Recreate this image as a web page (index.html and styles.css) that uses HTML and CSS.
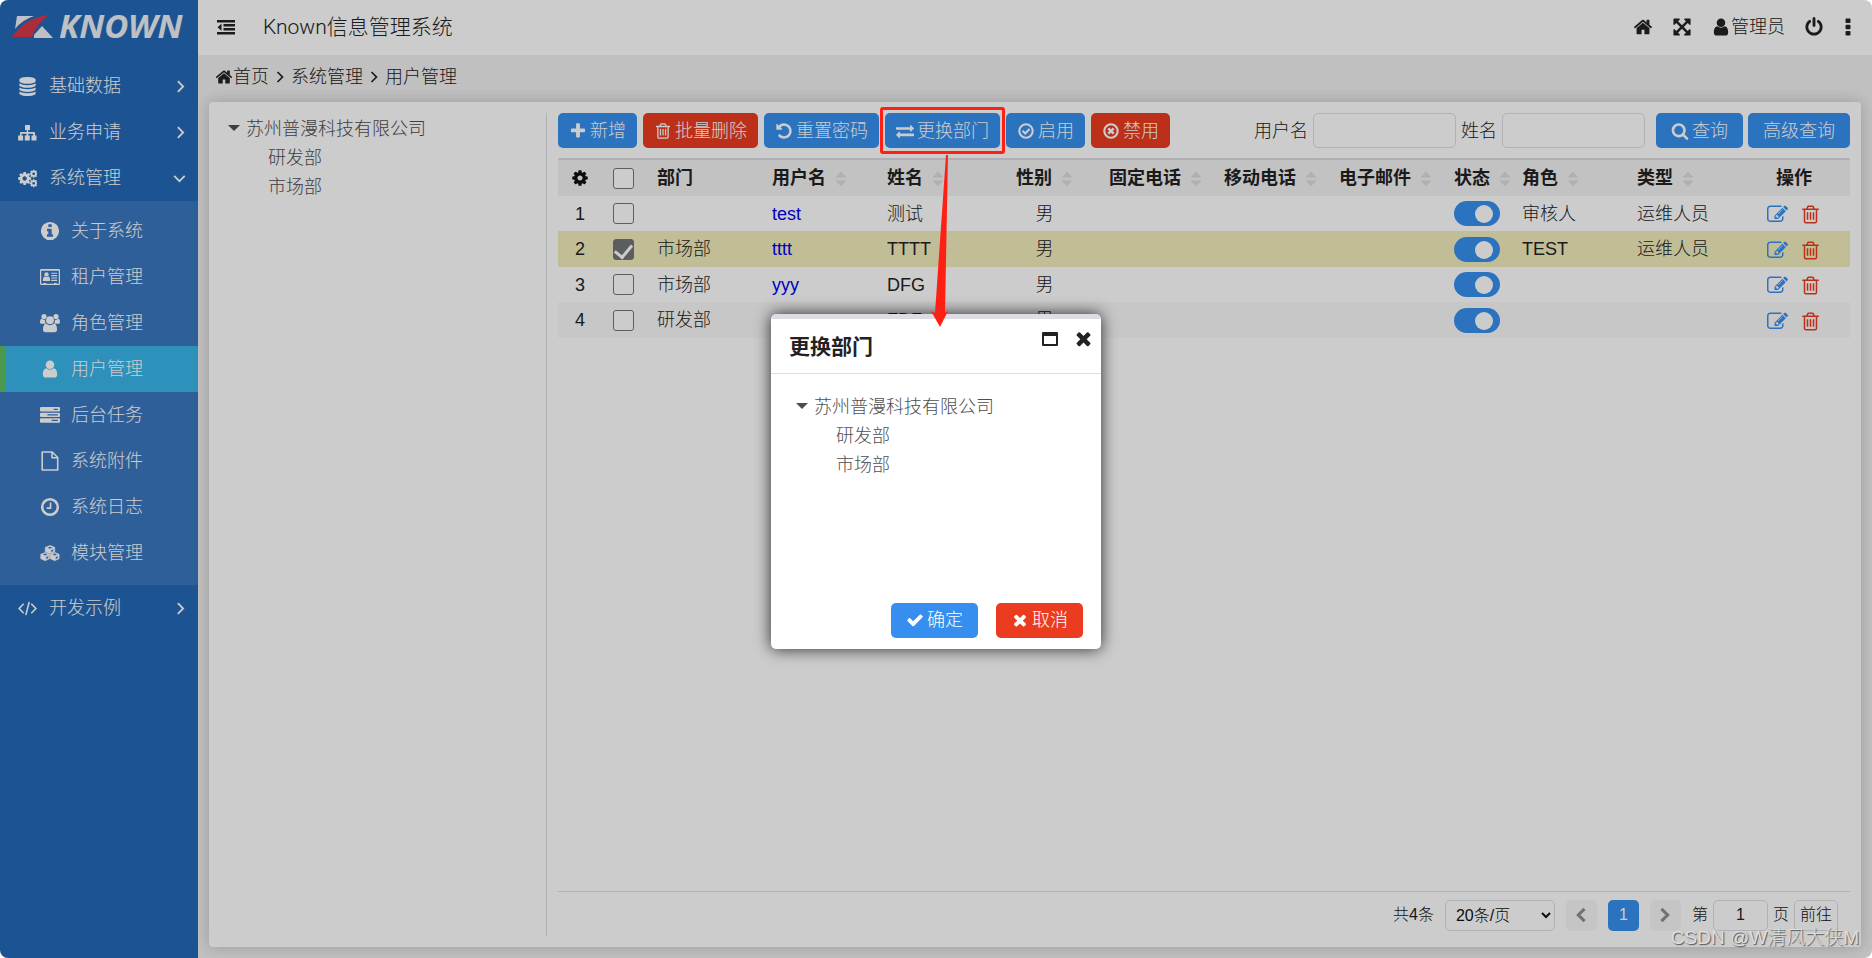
FILE: index.html
```
<!DOCTYPE html>
<html lang="zh-CN">
<head>
<meta charset="utf-8">
<title>Known信息管理系统</title>
<link rel="stylesheet" href="styles.css">
</head>
<body>
<svg class="sprite" aria-hidden="true">
  <symbol id="home" viewBox="0 0 1792 1792"><path d="M1472 992v480q0 26-19 45t-45 19h-384v-384h-256v384h-384q-26 0-45-19t-19-45v-480q0-1 .5-3t.5-3l575-474 575 474q1 2 1 6zm223-69l-62 74q-8 9-21 11h-3q-13 0-21-7l-692-577-692 577q-12 8-24 7-13-2-21-11l-62-74q-8-10-7-23.500t11-21.500l719-599q32-26 76-26t76 26l244 204v-195q0-14 9-23t23-9h192q14 0 23 9t9 23v408l219 182q10 8 11 21.500t-7 23.500z"/></symbol>
  <symbol id="user" viewBox="0 0 1792 1792"><path d="M1536 1399q0 109-62.500 187t-150.500 78h-854q-88 0-150.500-78t-62.500-187q0-85 8.500-160.500t31.500-152 58.500-131 94-89 134.500-34.500q131 128 313 128t313-128q76 0 134.500 34.500t94 89 58.500 131 31.500 152 8.500 160.500zm-256-887q0 159-112.500 271.500t-271.500 112.500-271.500-112.500-112.500-271.500 112.500-271.500 271.500-112.500 271.500 112.500 112.500 271.500z"/></symbol>
  <symbol id="expand" viewBox="0 0 1792 1792"><path d="M1411 541l-355 355 355 355 144-144q29-31 70-14 39 17 39 59v448q0 26-19 45t-45 19h-448q-42 0-59-40-17-39 14-69l144-144-355-355-355 355 144 144q31 30 14 69-17 40-59 40h-448q-26 0-45-19t-19-45v-448q0-42 40-59 39-17 69 14l144 144 355-355-355-355-144 144q-19 19-45 19-12 0-24-5-40-17-40-59v-448q0-26 19-45t45-19h448q42 0 59 40 17 39-14 69l-144 144 355 355 355-355-144-144q-31-30-14-69 17-40 59-40h448q26 0 45 19t19 45v448q0 42-39 59-13 5-25 5-26 0-45-19z"/></symbol>
  <symbol id="power" viewBox="0 0 1792 1792"><path d="M1664 896q0 156-61 298t-164 245-245 164-298 61-298-61-245-164-164-245-61-298q0-182 80.500-343t226.500-270q43-32 95.500-25t83.500 50q32 42 24.500 94.500t-49.500 84.500q-98 74-151.500 181t-53.500 228q0 104 40.500 198.500t109.500 163.500 163.500 109.500 198.500 40.500 198.500-40.500 163.500-109.500 109.500-163.500 40.500-198.500q0-121-53.500-228t-151.500-181q-42-32-49.500-84.500t24.500-94.500q31-43 84-50t95 25q146 109 226.500 270t80.500 343zm-640-768v640q0 52-38 90t-90 38-90-38-38-90v-640q0-52 38-90t90-38 90 38 38 90z"/></symbol>
  <symbol id="more" viewBox="0 0 10 20"><rect x="2.500" y="1.500" width="5" height="4.500" rx="1"/><rect x="2.500" y="7.700" width="5" height="4.500" rx="1"/><rect x="2.500" y="14" width="5" height="4.500" rx="1"/></symbol>
  <symbol id="dedent" viewBox="0 0 18 16"><path d="M0 1h18v2.500H0zM6.500 5h11.500v2.500H6.500zM6.500 9h11.500v2.500H6.500zM0 13h18v2.500H0zM4.500 4.700v7L0.500 8.200z"/></symbol>
  <symbol id="plus" viewBox="0 0 1792 1792"><path d="M1600 736v192q0 40-28 68t-68 28h-416v416q0 40-28 68t-68 28h-192q-40 0-68-28t-28-68v-416h-416q-40 0-68-28t-28-68v-192q0-40 28-68t68-28h416v-416q0-40 28-68t68-28h192q40 0 68 28t28 68v416h416q40 0 68 28t28 68z"/></symbol>
  <symbol id="trash" viewBox="0 0 1792 1792"><path d="M704 736v576q0 14-9 23t-23 9h-64q-14 0-23-9t-9-23v-576q0-14 9-23t23-9h64q14 0 23 9t9 23zm256 0v576q0 14-9 23t-23 9h-64q-14 0-23-9t-9-23v-576q0-14 9-23t23-9h64q14 0 23 9t9 23zm256 0v576q0 14-9 23t-23 9h-64q-14 0-23-9t-9-23v-576q0-14 9-23t23-9h64q14 0 23 9t9 23zm128 724v-948h-896v948q0 22 7 40.500t14.500 27 10.500 8.500h832q3 0 10.500-8.500t14.500-27 7-40.500zm-672-1076h448l-48-117q-7-9-17-11h-317q-10 2-17 11zm928 32v64q0 14-9 23t-23 9h-96v948q0 83-47 143.500t-113 60.500h-832q-66 0-113-58.500t-47-141.500v-952h-96q-14 0-23-9t-9-23v-64q0-14 9-23t23-9h309l70-167q15-37 54-63t79-26h320q40 0 79 26t54 63l70 167h309q14 0 23 9t9 23z"/></symbol>
  <symbol id="undo" viewBox="0 0 1792 1792"><path d="M1664 896q0 156-61 298t-164 245-245 164-298 61q-172 0-327-72.500t-264-204.500q-7-10-6.500-22.500t8.500-20.500l137-138q10-9 25-9 16 2 23 12 73 95 179 147t225 52q104 0 198.500-40.500t163.500-109.500 109.500-163.500 40.500-198.500-40.500-198.500-109.500-163.500-163.500-109.500-198.500-40.500q-98 0-188 35.500t-160 101.500l137 138q31 30 14 69-17 40-59 40h-448q-26 0-45-19t-19-45v-448q0-42 40-59 39-17 69 14l130 129q107-101 244.500-156.500t284.500-55.500q156 0 298 61t245 164 164 245 61 298z"/></symbol>
  <symbol id="exchange" viewBox="0 0 1792 1792"><path d="M1792 1184v192q0 13-9.500 22.500t-22.500 9.500h-1376v192q0 13-9.500 22.500t-22.500 9.500q-12 0-24-10l-319-320q-9-9-9-22 0-14 9-23l320-320q9-9 23-9 13 0 22.500 9.500t9.500 22.500v192h1376q13 0 22.500 9.500t9.500 22.500zm0-544q0 14-9 23l-320 320q-9 9-23 9-13 0-22.500-9.500t-9.500-22.500v-192h-1376q-13 0-22.500-9.500t-9.500-22.500v-192q0-13 9.500-22.500t22.500-9.500h1376v-192q0-14 9-23t23-9q12 0 24 10l319 319q9 9 9 23z"/></symbol>
  <symbol id="check-circle" viewBox="0 0 18 18"><circle cx="9" cy="9" r="6.700" fill="none" stroke="currentColor" stroke-width="2.100"/><path d="M5.600 8.800l2.600 2.600 4.400-4.400" fill="none" stroke="currentColor" stroke-width="2.100"/></symbol>
  <symbol id="times-circle" viewBox="0 0 18 18"><circle cx="9" cy="9" r="6.700" fill="none" stroke="currentColor" stroke-width="2.100"/><path d="M6.300 6.300l5.400 5.400M11.700 6.300l-5.400 5.400" fill="none" stroke="currentColor" stroke-width="2.600"/></symbol>
  <symbol id="search" viewBox="0 0 1792 1792"><path d="M1216 832q0-185-131.500-316.500t-316.500-131.500-316.500 131.500-131.500 316.500 131.500 316.500 316.500 131.500 316.500-131.500 131.500-316.500zm512 832q0 52-38 90t-90 38q-54 0-90-38l-343-342q-179 124-399 124-143 0-273.500-55.500t-225-150-150-225-55.500-273.500 55.500-273.500 150-225 225-150 273.500-55.500 273.500 55.500 225 150 150 225 55.500 273.500q0 220-124 399l343 343q37 37 37 90z"/></symbol>
  <symbol id="check" viewBox="0 0 1792 1792"><path d="M1671 566q0 40-28 68l-724 724-136 136q-28 28-68 28t-68-28l-136-136-362-362q-28-28-28-68t28-68l136-136q28-28 68-28t68 28l294 295 656-657q28-28 68-28t68 28l136 136q28 28 28 68z"/></symbol>
  <symbol id="times" viewBox="0 0 1792 1792"><path d="M1490 1322q0 40-28 68l-136 136q-28 28-68 28t-68-28l-294-294-294 294q-28 28-68 28t-68-28l-136-136q-28-28-28-68t28-68l294-294-294-294q-28-28-28-68t28-68l136-136q28-28 68-28t68 28l294 294 294-294q28-28 68-28t68 28l136 136q28 28 28 68t-28 68l-294 294 294 294q28 28 28 68z"/></symbol>
  <symbol id="cog" viewBox="0 0 1792 1792"><path d="M1152 896q0-106-75-181t-181-75-181 75-75 181 75 181 181 75 181-75 75-181zm512-109v222q0 12-8 23t-20 13l-185 28q-19 54-39 91 35 50 107 138 10 12 10 25t-9 23q-27 37-99 108t-94 71q-12 0-26-9l-138-108q-44 23-91 38-16 136-29 186-7 28-36 28h-222q-14 0-24.500-8.500t-11.500-21.500l-28-184q-49-16-90-37l-141 107q-10 9-25 9-14 0-25-11-126-114-165-168-7-10-7-23 0-12 8-23 15-21 51-66.500t54-70.500q-27-50-41-99l-183-27q-13-2-21-12.500t-8-23.500v-222q0-12 8-23t19-13l186-28q14-46 39-92-40-57-107-138-10-12-10-24 0-10 9-23 26-36 98.500-107.500t94.500-71.500q13 0 26 10l138 107q44-23 91-38 16-136 29-186 7-28 36-28h222q14 0 24.500 8.500t11.500 21.500l28 184q49 16 90 37l142-107q9-9 24-9 13 0 25 10 129 119 165 170 7 8 7 22 0 12-8 23-15 21-51 66.500t-54 70.500q26 50 41 98l183 28q13 2 21 12.500t8 23.500z"/></symbol>
  <symbol id="cogs" viewBox="0 0 20 18"><use href="#cog" x="-1" y="1" width="16" height="16"/><use href="#cog" x="11.500" y="-1" width="10" height="10"/><use href="#cog" x="11.500" y="9" width="10" height="10"/></symbol>
  <symbol id="database" viewBox="0 0 1792 1792"><path d="M896 768q237 0 443-43t325-127v170q0 69-103 128t-280 93.500-385 34.500-385-34.500-280-93.500-103-128v-170q119 84 325 127t443 43zm0 768q237 0 443-43t325-127v170q0 69-103 128t-280 93.500-385 34.500-385-34.500-280-93.500-103-128v-170q119 84 325 127t443 43zm0-384q237 0 443-43t325-127v170q0 69-103 128t-280 93.500-385 34.500-385-34.500-280-93.500-103-128v-170q119 84 325 127t443 43zm0-1152q208 0 385 34.500t280 93.500 103 128v128q0 69-103 128t-280 93.500-385 34.500-385-34.500-280-93.500-103-128v-128q0-69 103-128t280-93.500 385-34.500z"/></symbol>
  <symbol id="sitemap" viewBox="0 0 19 18"><path d="M7 1.500h5v5H10.200v2h5.800q1 0 1 1v2.500h1.500v5h-5v-5h1.700v-1.700h-5v1.700h1.600v5h-5v-5h1.700v-1.700h-5v1.700h1.600v5h-5v-5H2V9.500q0-1 1-1h5.700v-2H7z"/></symbol>
  <symbol id="info" viewBox="0 0 18 18"><path fill-rule="evenodd" d="M9 .8a8.200 8.200 0 1 0 0 16.400A8.200 8.200 0 0 0 9 .8zM7.500 3h3v2.500h-3zM6.300 7h4.200v5h1.200v2.200H6.300V12h1.200V9.200H6.300z"/></symbol>
  <symbol id="card" viewBox="0 0 21 17"><path fill-rule="evenodd" d="M1.500 0h18q1.500 0 1.500 1.500v14q0 1.500-1.500 1.500h-18Q0 17 0 15.500v-14Q0 0 1.500 0zM1.300 2v13.700h2.200v-1h3v1h8v-1h3v1h2.200V2z"/><circle cx="6.800" cy="5.800" r="2.300"/><path d="M3 12.700q0-4.500 2-4.700 1.800 1.200 3.600 0 2 .2 2 4.700zM11.800 4h6.200v1.200h-6.200zM11.800 6.500h6.200v1.200h-6.200zM11.800 9h6.200v1.200h-6.200zM11.800 11.500h6.200v1.200h-6.200z"/></symbol>
  <symbol id="users" viewBox="0 0 20 19"><circle cx="4" cy="3" r="2.600"/><circle cx="16" cy="3" r="2.600"/><path d="M0 9.500q0-4.200 1.800-4.200 1.500 1.300 3.200.9-.2 2.300 1 4H2Q0 10.200 0 9.500zM20 9.500q0-4.200-1.800-4.200-1.500 1.300-3.200.9.200 2.300-1 4h4q2 0 2-.7z"/><circle cx="10" cy="6.700" r="3.900"/><path d="M3 16q0-5.700 3.200-5.700 3.800 2.800 7.600 0 3.200 0 3.200 5.700 0 2.700-2.500 2.700h-9Q3 18.700 3 16z"/></symbol>
  <symbol id="server" viewBox="0 0 19 15"><path fill-rule="evenodd" d="M1 0h17q1 0 1 1v2.200q0 1-1 1H1q-1 0-1-1V1Q0 0 1 0zM13 1.500v1.200h4V1.500zM1 5.300h17q1 0 1 1v2.200q0 1-1 1H1q-1 0-1-1V6.300q0-1 1-1zM7 6.800V8h10V6.800zM1 10.600h17q1 0 1 1v2.200q0 1-1 1H1q-1 0-1-1v-2.200q0-1 1-1zM11 12.100v1.200h6v-1.200z"/></symbol>
  <symbol id="file" viewBox="0 0 18 20"><path d="M1.200 1h10l5.500 5.500V19H1.200zM11 1.200v5.500h5.500" fill="none" stroke="currentColor" stroke-width="1.600" stroke-linejoin="round"/></symbol>
  <symbol id="clock" viewBox="0 0 18 18"><circle cx="9" cy="9" r="7" fill="none" stroke="currentColor" stroke-width="2.300"/><path d="M9.500 5v5H6" fill="none" stroke="currentColor" stroke-width="1.500"/></symbol>
  <symbol id="cubes" viewBox="0 0 23 19"><g stroke-linejoin="round" stroke="currentColor"><path fill-rule="evenodd" d="M11.500.8L17 3v5l-5.500 2.500L6 8V3zM8 3.400l3.500 1.500L15 3.400 11.500 2zM12.500 6.200v2.800l3-1.400V5z" stroke-width=".6"/><path fill-rule="evenodd" d="M6 8.800l5 2.200v5l-5 2.400-5.200-2.400v-5zM2.800 11.200L6 12.700l3.200-1.500L6 9.900zM6.800 14v3l2.900-1.500v-2.800z" stroke-width=".6"/><path fill-rule="evenodd" d="M17 8.800l5 2.200v5l-5 2.400-5.200-2.400v-5zM13.800 11.200l3.200 1.500 3.200-1.500L17 9.900zM17.800 14v3l2.900-1.500v-2.800z" stroke-width=".6"/></g></symbol>
  <symbol id="code" viewBox="0 0 20 16"><path d="M6 3L1.200 8 6 13M14 3l4.800 5L14 13M11.800 1L8.200 15" fill="none" stroke="currentColor" stroke-width="1.700"/></symbol>
  <symbol id="edit" viewBox="0 0 1792 1792"><path d="M888 1184l116-116-152-152-116 116v56h96v96h56zm440-720q-16-16-33 1l-350 350q-17 17-1 33t33-1l350-350q17-17 1-33zm80 594v190q0 119-84.500 203.500t-203.500 84.500h-832q-119 0-203.500-84.500t-84.500-203.500v-832q0-119 84.500-203.500t203.500-84.500h832q63 0 117 25 15 7 18 23 3 17-9 29l-49 49q-14 14-32 8-23-6-45-6h-832q-66 0-113 47t-47 113v832q0 66 47 113t113 47h832q66 0 113-47t47-113v-126q0-13 9-22l64-64q15-15 35-7t20 29zm-96-738l288 288-672 672h-288v-288zm444 132l-92 92-288-288 92-92q28-28 68-28t68 28l152 152q28 28 28 68t-28 68z"/></symbol>
  <symbol id="angle" viewBox="0 0 18 18"><path d="M6.500 4L11.500 9l-5 5" fill="none" stroke="currentColor" stroke-width="1.700"/></symbol>
  <symbol id="angle-down" viewBox="0 0 18 18"><path d="M3 6.500l5 5 5-5" fill="none" stroke="currentColor" stroke-width="1.700"/></symbol>
  <symbol id="chevron-left" viewBox="0 0 18 18"><path d="M13 2L6 9l7 7" fill="none" stroke="currentColor" stroke-width="3.500"/></symbol>
  <symbol id="chevron-right" viewBox="0 0 18 18"><path d="M5 2l7 7-7 7" fill="none" stroke="currentColor" stroke-width="3.500"/></symbol>
  <symbol id="caret" viewBox="0 0 12 12"><path d="M0 2h12L6 8z"/></symbol>
  <symbol id="sort" viewBox="0 0 12 16"><path d="M.5 6.500h11L6 .5zM.5 9.500h11L6 15.500z"/></symbol>
  <symbol id="window" viewBox="0 0 18 18"><path fill-rule="evenodd" d="M2 2h14q1 0 1 1v12q0 1-1 1H2q-1 0-1-1V3q0-1 1-1zM3 6v8h12V6z"/></symbol>
</svg>

<div class="app">
  <aside class="sidebar">
    <a class="logo" href="#" aria-label="KNOWN">
      <svg class="logo-mark" viewBox="0 0 42 24"><path d="M5 2h17Q10 6 3 15z" fill="#eef0f4"/><path d="M0 23Q14 3 37 1 25 9 20 23z" fill="#d93848"/><path d="M22 21l8-9 11 12H22z" fill="#eef0f4"/></svg>
      <span>KNOWN</span>
    </a>
    <nav class="menu">
      <a class="item" href="#"><svg class="icon"><use href="#database"/></svg><span>基础数据</span><svg class="icon"><use href="#angle"/></svg></a>
      <a class="item" href="#"><svg class="icon"><use href="#sitemap"/></svg><span>业务申请</span><svg class="icon"><use href="#angle"/></svg></a>
      <a class="item" href="#"><svg class="icon"><use href="#cogs"/></svg><span>系统管理</span><svg class="icon"><use href="#angle-down"/></svg></a>
      <div class="submenu">
        <a class="item sub" href="#"><svg class="icon"><use href="#info"/></svg><span>关于系统</span></a>
        <a class="item sub" href="#"><svg class="icon"><use href="#card"/></svg><span>租户管理</span></a>
        <a class="item sub" href="#"><svg class="icon"><use href="#users"/></svg><span>角色管理</span></a>
        <a class="item sub active" href="#"><svg class="icon"><use href="#user"/></svg><span>用户管理</span></a>
        <a class="item sub" href="#"><svg class="icon"><use href="#server"/></svg><span>后台任务</span></a>
        <a class="item sub" href="#"><svg class="icon"><use href="#file"/></svg><span>系统附件</span></a>
        <a class="item sub" href="#"><svg class="icon"><use href="#clock"/></svg><span>系统日志</span></a>
        <a class="item sub" href="#"><svg class="icon"><use href="#cubes"/></svg><span>模块管理</span></a>
      </div>
      <a class="item" href="#"><svg class="icon"><use href="#code"/></svg><span>开发示例</span><svg class="icon"><use href="#angle"/></svg></a>
    </nav>
  </aside>

  <div class="main">
    <header class="header">
      <button class="bare" aria-label="收起菜单"><svg class="icon"><use href="#dedent"/></svg></button>
      <h1>Known信息管理系统</h1>
      <div class="header-tools">
        <button class="bare" aria-label="首页"><svg class="icon"><use href="#home"/></svg></button>
        <button class="bare" aria-label="全屏"><svg class="icon"><use href="#expand"/></svg></button>
        <button class="bare"><svg class="icon"><use href="#user"/></svg>管理员</button>
        <button class="bare" aria-label="退出"><svg class="icon"><use href="#power"/></svg></button>
        <button class="bare" aria-label="更多"><svg class="icon narrow"><use href="#more"/></svg></button>
      </div>
    </header>
    <nav class="crumbs">
      <a href="#"><svg class="icon"><use href="#home"/></svg>首页</a>
      <svg class="icon"><use href="#angle"/></svg>
      <span>系统管理</span>
      <svg class="icon"><use href="#angle"/></svg>
      <span>用户管理</span>
    </nav>
    <main class="panel">
      <section class="tree-pane">
        <ul class="tree">
          <li><svg class="caret"><use href="#caret"/></svg>苏州普漫科技有限公司
            <ul><li>研发部</li><li>市场部</li></ul>
          </li>
        </ul>
      </section>
      <section class="list-pane">
        <div class="toolbar">
          <button class="btn"><svg class="icon"><use href="#plus"/></svg>新增</button>
          <button class="btn danger"><svg class="icon"><use href="#trash"/></svg>批量删除</button>
          <button class="btn"><svg class="icon"><use href="#undo"/></svg>重置密码</button>
          <div class="marked">
            <button class="btn"><svg class="icon"><use href="#exchange"/></svg>更换部门</button>
            <div class="mark-frame"></div>
            <svg class="mark-arrow" viewBox="0 0 18 172"><path d="M15 0h2L14 158l3-2L9 172 0 156l4 2z"/></svg>
          </div>
          <button class="btn"><svg class="icon"><use href="#check-circle"/></svg>启用</button>
          <button class="btn danger"><svg class="icon"><use href="#times-circle"/></svg>禁用</button>
          <form class="search">
            <label for="q-user">用户名</label><input id="q-user" type="text">
            <label for="q-name">姓名</label><input id="q-name" type="text">
            <button class="btn roomy first" type="button"><svg class="icon"><use href="#search"/></svg>查询</button>
            <button class="btn roomy" type="button">高级查询</button>
          </form>
        </div>
        <div class="table-wrap">
          <table>
            <colgroup><col class="c-no"><col class="c-check"><col class="c-text"><col class="c-text"><col class="c-name"><col class="c-sex"><col class="c-text"><col class="c-text"><col class="c-text"><col class="c-state"><col class="c-text"><col class="c-text"><col class="c-ops"></colgroup>
            <thead>
              <tr>
                <th class="center"><svg class="icon gear"><use href="#cog"/></svg></th>
                <th><input type="checkbox" aria-label="全选"></th>
                <th>部门</th>
                <th>用户名<svg class="sort"><use href="#sort"/></svg></th>
                <th>姓名<svg class="sort"><use href="#sort"/></svg></th>
                <th class="center">性别<svg class="sort"><use href="#sort"/></svg></th>
                <th>固定电话<svg class="sort"><use href="#sort"/></svg></th>
                <th>移动电话<svg class="sort"><use href="#sort"/></svg></th>
                <th>电子邮件<svg class="sort"><use href="#sort"/></svg></th>
                <th>状态<svg class="sort"><use href="#sort"/></svg></th>
                <th>角色<svg class="sort"><use href="#sort"/></svg></th>
                <th>类型<svg class="sort"><use href="#sort"/></svg></th>
                <th class="center ops">操作</th>
              </tr>
            </thead>
            <tbody>
              <tr><td class="center">1</td><td><input type="checkbox" aria-label="选择第1行"></td><td></td><td><a href="#">test</a></td><td>测试</td><td class="center">男</td><td></td><td></td><td></td><td><input class="switch" type="checkbox" aria-label="状态" checked></td><td>审核人</td><td>运维人员</td><td class="center ops"><button class="bare edit" aria-label="编辑"><svg class="icon"><use href="#edit"/></svg></button><button class="bare remove" aria-label="删除"><svg class="icon"><use href="#trash"/></svg></button></td></tr>
              <tr class="selected"><td class="center">2</td><td><input type="checkbox" aria-label="选择第2行" checked></td><td>市场部</td><td><a href="#">tttt</a></td><td>TTTT</td><td class="center">男</td><td></td><td></td><td></td><td><input class="switch" type="checkbox" aria-label="状态" checked></td><td>TEST</td><td>运维人员</td><td class="center ops"><button class="bare edit" aria-label="编辑"><svg class="icon"><use href="#edit"/></svg></button><button class="bare remove" aria-label="删除"><svg class="icon"><use href="#trash"/></svg></button></td></tr>
              <tr><td class="center">3</td><td><input type="checkbox" aria-label="选择第3行"></td><td>市场部</td><td><a href="#">yyy</a></td><td>DFG</td><td class="center">男</td><td></td><td></td><td></td><td><input class="switch" type="checkbox" aria-label="状态" checked></td><td></td><td></td><td class="center ops"><button class="bare edit" aria-label="编辑"><svg class="icon"><use href="#edit"/></svg></button><button class="bare remove" aria-label="删除"><svg class="icon"><use href="#trash"/></svg></button></td></tr>
              <tr><td class="center">4</td><td><input type="checkbox" aria-label="选择第4行"></td><td>研发部</td><td></td><td>FDF</td><td class="center">男</td><td></td><td></td><td></td><td><input class="switch" type="checkbox" aria-label="状态" checked></td><td></td><td></td><td class="center ops"><button class="bare edit" aria-label="编辑"><svg class="icon"><use href="#edit"/></svg></button><button class="bare remove" aria-label="删除"><svg class="icon"><use href="#trash"/></svg></button></td></tr>
            </tbody>
          </table>
        </div>
        <footer class="pager">
          <span>共4条</span>
          <select aria-label="每页条数"><option>20条/页</option></select>
          <button class="page" aria-label="上一页"><svg class="icon"><use href="#chevron-left"/></svg></button>
          <button class="page current">1</button>
          <button class="page" aria-label="下一页"><svg class="icon"><use href="#chevron-right"/></svg></button>
          <div class="jump"><label for="page-no">第</label><input id="page-no" type="text" value="1"><span>页</span><button type="button">前往</button></div>
        </footer>
      </section>
    </main>
  </div>

  <div class="mask">
    <div class="dialog" role="dialog" aria-labelledby="dialog-title">
      <div class="dialog-head">
        <h2 id="dialog-title">更换部门</h2>
        <div class="dialog-tools">
          <button class="bare" aria-label="最大化"><svg class="icon"><use href="#window"/></svg></button>
          <button class="bare" aria-label="关闭"><svg class="icon big"><use href="#times"/></svg></button>
        </div>
      </div>
      <div class="dialog-body">
        <ul class="tree">
          <li><svg class="caret"><use href="#caret"/></svg>苏州普漫科技有限公司
            <ul><li>研发部</li><li>市场部</li></ul>
          </li>
        </ul>
      </div>
      <div class="dialog-foot">
        <button class="btn roomy"><svg class="icon"><use href="#check"/></svg>确定</button>
        <button class="btn danger roomy"><svg class="icon"><use href="#times"/></svg>取消</button>
      </div>
    </div>
  </div>
  <div class="watermark">CSDN @W清风大侠M</div>
</div>
</body>
</html>
```
FILE: styles.css
```
* { box-sizing: border-box; }
html, body { height: 100%; }
body {
  margin: 0;
  background: #fff;
  color: #222;
  font: 18px/24px "Liberation Sans", "Noto Sans CJK SC", sans-serif;
  font-weight: 300;
}
button, input, select { font: inherit; color: inherit; margin: 0; }
a { color: inherit; text-decoration: none; }
ul { list-style: none; margin: 0; padding: 0; }
h1, h2 { margin: 0; }
.sprite { display: none; }
.icon { width: 18px; height: 18px; fill: currentColor; flex: none; overflow: visible; }
.bare { border: 0; padding: 0; background: none; display: inline-flex; align-items: center; white-space: nowrap; }

.app { position: relative; display: flex; min-height: 100vh; border-radius: 8px; overflow: hidden; }

/* sidebar */
.sidebar { width: 198px; flex: none; background: #246ab8; color: #fff; }
.logo { display: flex; align-items: center; gap: 5px; height: 52px; padding-left: 12px; color: #eef0f4; font: italic 700 33px/40px "Noto Sans", sans-serif; }
.logo-mark { width: 42px; height: 24px; flex: none; }
.menu { padding-top: 11px; }
.item { display: flex; align-items: center; height: 46px; padding: 0 8px 0 18px; }
.item .icon { width: 19px; height: 19px; }
.item span { flex: 1; padding-left: 12px; }
.submenu { padding: 7px 0 9px; background: #3b77c0; }
.sub { padding-left: 35px; border-left: 5px solid transparent; }
.sub .icon { width: 20px; height: 20px; }
.sub span { padding-left: 11px; }
.active { background: #39b6ea; border-color: #5fbe60; }

/* header */
.main { flex: 1; min-width: 0; display: flex; flex-direction: column; background: #f1f1f1; }
.header { display: flex; align-items: center; height: 55px; padding: 0 19px 2px; background: #fff; }
.header h1 { margin-left: 28px; font: 300 21px/28px Roboto, "Noto Sans CJK SC", sans-serif; }
.header-tools { display: flex; gap: 19px; margin-left: auto; }
.header-tools .icon { width: 20px; height: 20px; }
.header-tools .narrow { width: 10px; }
.crumbs { display: flex; align-items: center; gap: 2px; height: 47px; padding: 0 0 3px 17px; }
.crumbs a { display: flex; align-items: center; }

.panel { flex: 1; display: flex; margin: 0 11px 11px; padding: 11px; background: #fff; border-radius: 4px; box-shadow: 0 0 16px rgba(0, 0, 0, .2); }
.tree-pane { width: 327px; flex: none; padding: 2px 0 0 8px; border-right: 1px solid #dfdfe3; }
.tree { line-height: 29px; color: #4e4e4e; }
.caret { width: 12px; height: 12px; margin-right: 6px; fill: currentColor; }
.tree ul { padding-left: 40px; }

.list-pane { flex: 1; min-width: 0; display: flex; flex-direction: column; padding-left: 11px; }
.toolbar { display: flex; gap: 6px; }
.btn { display: flex; align-items: center; gap: 3px; height: 35px; padding: 0 11px; border: 0; border-radius: 5px; background: #368fef; color: #fff; white-space: nowrap; }
.btn .icon { width: 18px; height: 18px; }
.danger { background: #eb3c20; }
.roomy { padding: 0 15px; }
.search { display: flex; gap: 5px; margin-left: auto; align-items: center; }
.search input { width: 143px; height: 35px; padding: 0 8px; border: 1px solid #dfdfe3; border-radius: 5px; background: #fff; }
.search .first { margin-left: 6px; }

/* call-out drawn above the mask */
.marked { position: relative; }
.mark-frame { position: absolute; z-index: 3; inset: -6px -5px; border: 3px solid #ff2014; border-radius: 3px; }
.mark-arrow { position: absolute; z-index: 3; top: 42px; left: 46px; width: 18px; height: 172px; fill: #ff2014; }

/* table */
.table-wrap { flex: 1; margin-top: 10px; border-top: 2px solid #dcdce3; }
table { width: 100%; border-collapse: collapse; table-layout: fixed; }
.c-no { width: 44px; }
.c-check { width: 49px; }
.c-text { width: 115px; }
.c-name { width: 105px; }
.c-sex { width: 117px; }
.c-state { width: 68px; }
th, td { height: 35px; padding: 0 6px; text-align: left; white-space: nowrap; }
th { height: 36px; background: #f3f3f3; font-weight: 700; }
tbody tr:nth-child(even) td { height: 36px; background: #f9f9f9; }
tbody tr.selected td { background: #f2eebd; }
th:nth-child(2), td:nth-child(2) { padding-left: 11px; }
th.center, td.center { text-align: center; }
th.ops, td.ops { padding-right: 14px; }
td a { color: #0000f0; }
th input, td input { display: block; }
input[type="checkbox"]:not(.switch) { appearance: none; width: 21px; height: 21px; border: 1px solid #767676; border-radius: 3px; background: #fff; }
input[type="checkbox"]:not(.switch):checked { background: #757575; }
input[type="checkbox"]:not(.switch):checked::after { content: ""; display: block; width: 8px; height: 14px; margin: 1px auto; border: solid #fff; border-width: 0 3px 3px 0; transform: rotate(40deg); }
.switch { appearance: none; width: 46px; height: 25px; padding: 4px 7px; border-radius: 13px; background: #368fef; }
.switch::after { content: ""; display: block; width: 18px; height: 18px; margin-left: auto; border-radius: 50%; background: #fff; }
.gear { color: #111; display: block; margin: 0 auto; }
.sort { width: 12px; height: 16px; margin-left: 9px; fill: #dcdcdf; vertical-align: -3px; }
.ops .bare { vertical-align: middle; }
.ops .icon { width: 21px; height: 21px; }
.edit { color: #368fef; margin-right: 12px; }
.remove { color: #eb3c20; }

/* pager */
.pager { display: flex; align-items: center; justify-content: flex-end; gap: 11px; height: 45px; padding: 2px 12px 0 0; border-top: 1px solid #dfdfe3; font-size: 16px; }
.pager select { width: 110px; height: 31px; padding: 0 6px; border: 1px solid #dfdfe3; border-radius: 5px; background: #fff; color: #111; }
.page { display: grid; place-items: center; width: 31px; height: 31px; padding: 0; border: 0; border-radius: 5px; background: #f7f7f7; color: #8f8f8f; }
.page .icon { width: 16px; height: 16px; }
.current { background: #368fef; color: #fff; }
.jump { display: flex; align-items: center; gap: 5px; }
.jump input { width: 55px; height: 31px; padding: 0; border: 1px solid #dfdfe3; border-radius: 5px; background: #fff; text-align: center; }
.jump button { height: 31px; padding: 0 5px; border: 1px solid #dfdfe3; border-radius: 5px; background: #fff; color: #111; }

/* dialog */
.mask { position: absolute; z-index: 2; inset: 0; display: grid; place-items: center; padding-top: 4px; background: rgba(0, 0, 0, .2); }
.dialog { width: 330px; height: 335px; display: flex; flex-direction: column; border-top: 5px solid #dcdde2; border-radius: 5px; background: #fff; box-shadow: 0 0 16px rgba(0, 0, 0, .8); }
.dialog-head { display: flex; justify-content: space-between; height: 55px; padding: 0 7px 0 18px; border-bottom: 1px solid #dcdde2; }
.dialog-head h2 { font-size: 21px; line-height: 56px; }
.dialog-tools { display: flex; gap: 14px; height: 40px; }
.dialog-tools .big { width: 21px; height: 21px; }
.dialog-body { flex: 1; padding: 19px 25px; }
.dialog-foot { display: flex; justify-content: flex-end; gap: 18px; padding: 0 18px 11px; }

.watermark { position: absolute; z-index: 4; right: 13px; bottom: 8px; color: #dedede; font-size: 19px; text-shadow: 1px 1px 1px #555; }
```
